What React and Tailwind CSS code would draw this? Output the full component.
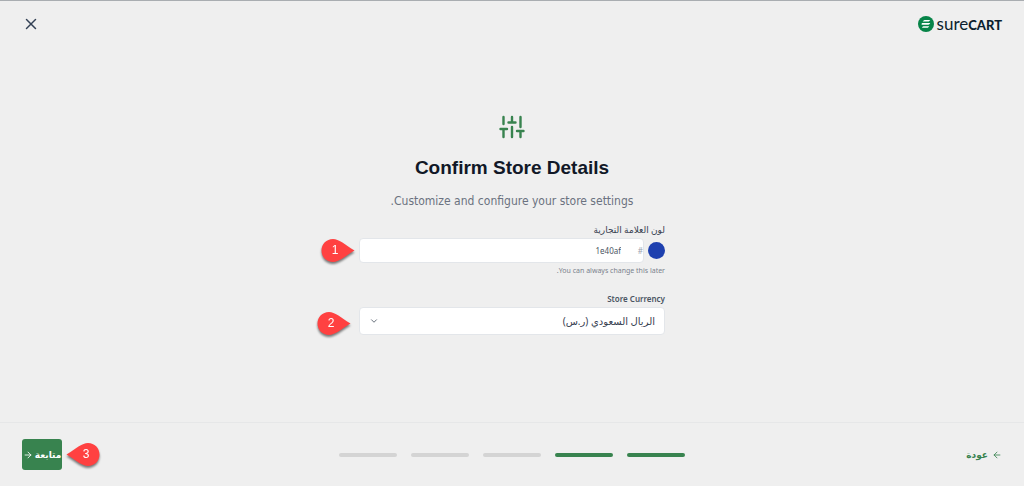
import { useState } from 'react';
import { ArrowLeft, ArrowRight, ChevronDown, X } from 'lucide-react';

const steps = [
  { id: 1, done: true },
  { id: 2, done: true },
  { id: 3, done: false },
  { id: 4, done: false },
  { id: 5, done: false },
];

function Logo() {
  return (
    <a href="#home" dir="ltr" aria-label="SureCart" className="flex items-center gap-[3px] text-[#0c1f2e]">
      <svg viewBox="0 0 16 16" className="size-4">
        <circle cx="8" cy="8" r="8" fill="#078448" />
        <path d="M6.700 4h5.600l-1 1.100c-.4.4-.8.5-1.300.5H4.600l.8-.9c.4-.5.8-.7 1.300-.7Z" fill="#fff" />
        <path d="M4.400 7.100h7.900l-.7.9c-.4.5-.8.7-1.300.7H3.600v-.8c0-.5.3-.8.8-.8Z" fill="#fff" />
        <path d="M5.500 10.300h5.800l-.9.9c-.4.4-.8.6-1.300.6H3.900l.5-.9c.3-.4.6-.6 1.100-.6Z" fill="#fff" />
      </svg>
      <span className="flex items-baseline [font-family:Lato,sans-serif] leading-4">
        <span className="text-[17px]">sure</span>
        <span className="text-[13px] font-black">CART</span>
      </span>
    </a>
  );
}

function SlidersIcon() {
  return (
    <svg viewBox="0 0 26 24" className="h-6 w-[26px]" fill="none" stroke="#38834f" strokeWidth="2.4" strokeLinecap="round">
      <path d="M4.5 2v7M4.5 14v8M1.500 14h6.500M13 2v5.500M9.500 7.500h7M13 12v10M21.500 2v10M21.500 16v6M18 16h6.500" />
    </svg>
  );
}

function Marker({ number, flip }) {
  return (
    <svg viewBox="0 0 34 25" className="h-[25px] w-[34px] drop-shadow-[0_2px_1px_rgba(0,0,0,0.5)]" aria-hidden="true">
      <path
        d="M12 1C5.500 1 .5 6 .5 12.500S5.500 24 12 24c6 0 11-5 21.500-11.500C23 6 18 1 12 1Z"
        fill="#ff4141"
        transform={flip ? 'matrix(-1 0 0 1 34 0)' : undefined}
      />
      <text
        x={flip ? 20 : 14}
        y="16"
        textAnchor="middle"
        fill="#fff"
        className="[font-family:'Liberation_Sans',sans-serif] text-[12px]"
      >
        {number}
      </text>
    </svg>
  );
}

function App() {
  const [color, setColor] = useState('1e40af');
  const [currency, setCurrency] = useState('sar');

  return (
    <div
      dir="rtl"
      className="flex min-h-screen flex-col border-t border-[#a9adb1] bg-[#efefef] font-['Noto_Sans','DejaVu_Sans',sans-serif] text-[#4b5563]"
    >
      <header className="flex h-[46px] items-center justify-between px-[22px]">
        <Logo />
        <button type="button" aria-label="Close" className="text-[#334155]">
          <X className="size-[18px]" strokeWidth={2} />
        </button>
      </header>

      <main className="flex flex-1 flex-col items-center px-4 pt-[68px] pb-8">
        <SlidersIcon />
        <h1 className="mt-[17px] font-['Liberation_Sans',sans-serif] text-[19px] leading-6 font-bold text-[#111827]">
          Confirm Store Details
        </h1>
        <p className="mt-[13px] [font-family:'DejaVu_Sans_Condensed','DejaVu_Sans',sans-serif] text-[12px] leading-4 text-[#6b7280]">
          Customize and configure your store settings.
        </p>

        <form className="mt-[15px] w-full max-w-[306px]">
          <label htmlFor="brand-color" className="block text-[9px] leading-3 font-medium text-[#374151]">
            لون العلامة التجارية
          </label>
          <div className="relative mt-[2px] flex items-center gap-1">
            <span className="size-[17px] shrink-0 rounded-full bg-[#1e40af]"></span>
            <div className="flex h-[25px] min-w-0 flex-1 items-center rounded-sm border border-[#e3e6ea] bg-white">
              <span className="w-[18px] text-[8px] text-[#9ca3af]">#</span>
              <input
                id="brand-color"
                type="text"
                value={color}
                onChange={(e) => setColor(e.target.value)}
                className="min-w-0 flex-1 bg-transparent px-1 text-[8px] outline-none"
              />
            </div>
            <div className="absolute right-full mr-1">
              <Marker number={1} />
            </div>
          </div>
          <p className="mt-[2px] text-[7px] leading-3 text-[#7b828d]">You can always change this later.</p>

          <label htmlFor="currency" className="mt-4 block text-[8px] leading-3 font-semibold">
            Store Currency
          </label>
          <div className="relative mt-[2px] flex items-center">
            <select
              id="currency"
              value={currency}
              onChange={(e) => setCurrency(e.target.value)}
              className="h-7 w-full appearance-none rounded-sm border border-[#e3e6ea] bg-white px-[9px] text-[10px] text-[#374151] outline-none"
            >
              <option value="sar">الريال السعودي (ر.س)</option>
            </select>
            <ChevronDown className="pointer-events-none absolute left-[10px] size-[10px]" strokeWidth={2} />
            <div className="absolute top-1 right-full mr-2">
              <Marker number={2} />
            </div>
          </div>
        </form>
      </main>

      <footer className="grid h-16 grid-cols-[1fr_auto_1fr] items-center border-t border-[#e6e7e8] px-[22px]">
        <a href="#back" className="flex items-center gap-1 text-[9px] font-bold text-[#38834f]">
          <ArrowLeft className="size-[10px]" />
          عودة
        </a>
        <div className="flex gap-[14px]">
          {steps.map((step) => (
            <span
              key={step.id}
              className={`h-1 w-[58px] rounded-full ${step.done ? 'bg-[#38834f]' : 'bg-[#d4d4d4]'}`}
            ></span>
          ))}
        </div>
        <div className="relative flex items-center justify-self-end">
          <button
            type="button"
            className="flex h-[31px] w-10 items-center justify-center gap-[2px] rounded-[3px] bg-[#38834f] text-[9px] font-bold text-white"
          >
            متابعة
            <ArrowRight className="size-[10px] shrink-0" strokeWidth={2} />
          </button>
          <div className="absolute left-full ml-1">
            <Marker number={3} flip />
          </div>
        </div>
      </footer>
    </div>
  );
}

export default App;
